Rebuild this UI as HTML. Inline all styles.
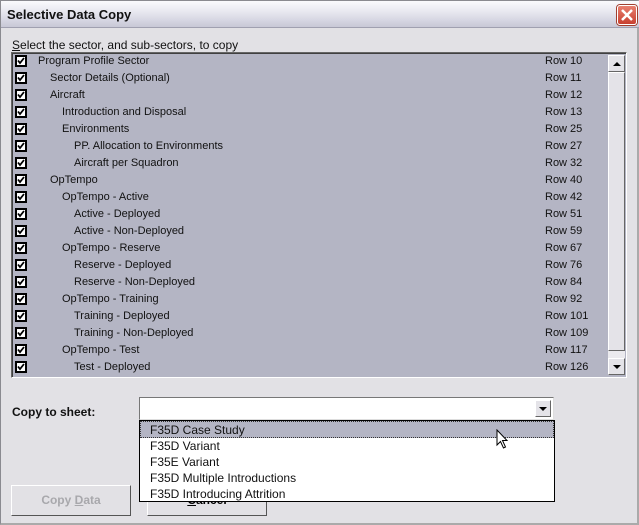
<!DOCTYPE html>
<html><head><style>
*{margin:0;padding:0;box-sizing:border-box}
body{width:639px;height:525px;overflow:hidden;background:#fff;font-family:"Liberation Sans",Arial,sans-serif;font-size:11px;position:relative}
.win{position:absolute;left:0;top:0;width:639px;height:525px;background:#e2e1e5;border:1px solid #8a8a90;border-right:2px solid #aaa;border-bottom:2px solid #aaa}
.title{position:absolute;left:0;top:0;width:639px;height:27px;background:linear-gradient(#fafafd,#e8e8f0 40%,#d8d8e4 70%,#c8c8d6);border-bottom:1px solid #a0a0b0}
.title span{position:absolute;left:6px;top:6px;font-weight:bold;font-size:13px;color:#111}
.close{position:absolute;left:616px;top:4px;width:20px;height:20px;background:linear-gradient(#e88070,#c84030);border:1px solid #fff;border-radius:3px;box-shadow:0 0 0 1px #a04030}
.lbl{position:absolute;left:11px;top:37px;font-size:12px;color:#111}
.list{position:absolute;left:10px;top:51px;width:616px;height:326px;background:#b4b5c4;border:1px solid #666;border-right-color:#fff;border-bottom-color:#fff;box-shadow:inset 1px 1px 0 #404040}
.row{position:absolute;left:0;height:17px;width:590px}
.cb{position:absolute;left:4px;top:2px;width:12px;height:12px;background:#fff;border:2px solid #000}
.cb svg{position:absolute;left:0;top:0}
.t{position:absolute;top:2px;font-size:11px;color:#111;white-space:nowrap}
.r{position:absolute;left:534px;top:2px;font-size:11px;color:#111}
.sb{position:absolute;left:596px;top:2px;width:17px;height:320px;background:#ebeaee}
.sbb{position:absolute;left:0;width:17px;height:17px;background:#e4e3e8;border:1px solid #fff;border-right-color:#666;border-bottom-color:#666}
.thumb{position:absolute;left:0;top:17px;width:17px;height:279px;background:#e4e3e8;border:1px solid #fff;border-right-color:#666;border-bottom-color:#666}
.arr{position:absolute;left:4px;width:0;height:0;border-left:4px solid transparent;border-right:4px solid transparent}
.cts{position:absolute;left:11px;top:404px;font-weight:bold;font-size:12px;color:#111}
.combo{position:absolute;left:138px;top:396px;width:415px;height:23px;background:#fff;border:1px solid #777;border-right-color:#ddd;border-bottom-color:#ddd}
.cbtn{position:absolute;right:2px;top:2px;width:16px;height:17px;background:#e4e3e8;border:1px solid #fff;border-right-color:#666;border-bottom-color:#666}
.drop{position:absolute;left:138px;top:419px;width:416px;height:82px;background:#fff;border:1px solid #000}
.it{position:absolute;left:10px;font-size:12px;color:#111;white-space:nowrap}
.btn{position:absolute;top:484px;width:120px;height:31px;background:#e2e1e5;border:1px solid #fff;border-right-color:#555;border-bottom-color:#555;text-align:center;line-height:29px;font-weight:bold;font-size:12px}
</style></head><body>
<div class="win">
<div class="title"><span>Selective Data Copy</span>
<div class="close"><svg width="18" height="18" viewBox="0 0 18 18"><path d="M4 4L14 14M14 4L4 14" stroke="#fff" stroke-width="2.5"/></svg></div></div>
<div class="lbl"><u>S</u>elect the sector, and sub-sectors, to copy</div>
<div class="list">
<div class="sb">
<div class="sbb" style="top:0"><div class="arr" style="top:6px;border-bottom:4px solid #000"></div></div>
<div class="thumb"></div>
<div class="sbb" style="top:303px"><div class="arr" style="top:6px;border-top:4px solid #000"></div></div>
</div>
</div>
<div class="btn" style="left:146px;"><u>C</u>ancel</div>
<div class="btn" style="left:10px;color:#a8a8ac">Copy <u>D</u>ata</div>
<div class="cts">Copy to sheet:</div>
<div class="combo"><div class="cbtn"><div class="arr" style="top:6px;left:3px;border-top:4px solid #000"></div></div></div>
<div class="drop">
<div style="position:absolute;left:0;top:0;width:414px;height:17px;background:#b4b5c4;border:1px dotted #333"></div>
<div class="it" style="top:2px">F35D Case Study</div>
<div class="it" style="top:18px">F35D Variant</div>
<div class="it" style="top:34px">F35E Variant</div>
<div class="it" style="top:50px">F35D Multiple Introductions</div>
<div class="it" style="top:66px">F35D Introducing Attrition</div>
<svg style="position:absolute;left:356px;top:8px" width="14" height="22" viewBox="0 0 14 22"><path d="M1 1L1 16L4.5 12.5L7.5 19L9.5 18L6.5 11.5L11 11.5Z" fill="#fff" stroke="#000" stroke-width="1"/></svg>
</div>
</div>
<div id="rows" style="position:absolute;left:11px;top:53px"></div>
<script>
var d=[["Program Profile Sector",0,10],["Sector Details (Optional)",1,11],["Aircraft",1,12],["Introduction and Disposal",2,13],["Environments",2,25],["PP. Allocation to Environments",3,27],["Aircraft per Squadron",3,32],["OpTempo",1,40],["OpTempo - Active",2,42],["Active - Deployed",3,51],["Active - Non-Deployed",3,59],["OpTempo - Reserve",2,67],["Reserve - Deployed",3,76],["Reserve - Non-Deployed",3,84],["OpTempo - Training",2,92],["Training - Deployed",3,101],["Training - Non-Deployed",3,109],["OpTempo - Test",2,117],["Test - Deployed",3,126]];
var h="";d.forEach(function(x,i){h+='<div class="row" style="top:'+(i*17)+'px"><div class="cb"><svg width="8" height="8" viewBox="0 0 8 8"><path d="M1 3.5L3 6L7 1" stroke="#000" stroke-width="1.8" fill="none"/></svg></div><div class="t" style="left:'+(27+12*x[1])+'px">'+x[0]+'</div><div class="r">Row '+x[2]+'</div></div>';});
document.getElementById("rows").innerHTML=h;
</script>
</body></html>
